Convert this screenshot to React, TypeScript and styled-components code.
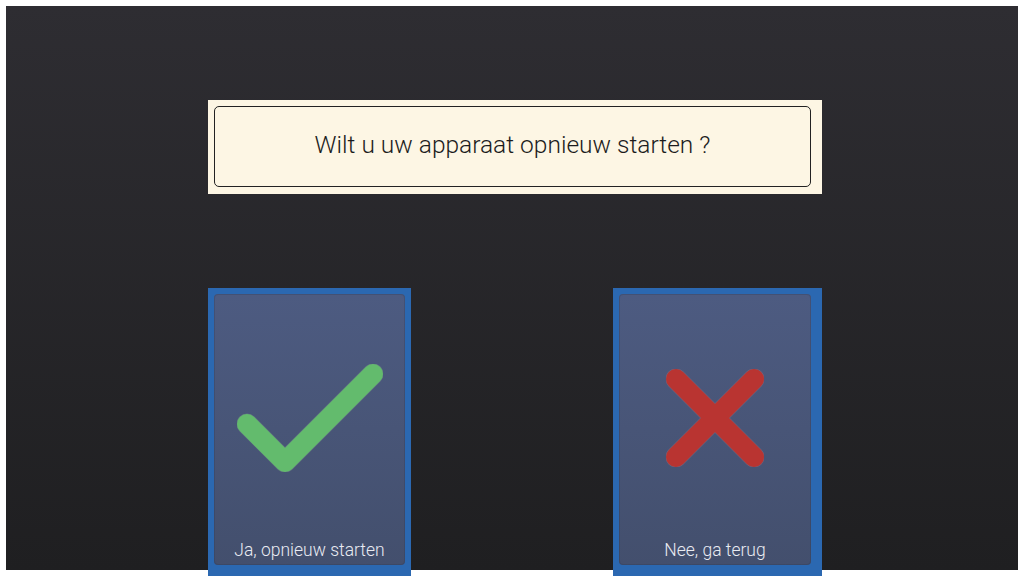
import React from "react";
import styled, { createGlobalStyle } from "styled-components";

const Global = createGlobalStyle`
  html, body {
    margin: 0;
    padding: 0;
    background: #ffffff;
    overflow: hidden;
    height: 576px;
  }
  body {
    padding: 6px;
    box-sizing: border-box;
    font-family: Roboto, "Noto Sans", "Liberation Sans", sans-serif;
  }
`;

const Stage = styled.div`
  width: 1012px;
  height: 564px;
  background: linear-gradient(to bottom, #2e2d32 0%, #1f1f21 100%);
  padding: 94px 0 0 202px;
  box-sizing: border-box;
`;

const Column = styled.div`
  width: 614px;
  display: flex;
  flex-direction: column;
  gap: 94px;
`;

const MessageFrame = styled.div`
  height: 94px;
  background: #fdf6e4;
  padding: 6px 11px 7px 6px;
  box-sizing: border-box;
  display: flex;
`;

const MessageBox = styled.div`
  flex: 1;
  border: 1px solid #222222;
  border-radius: 5px;
  display: flex;
  align-items: center;
  justify-content: center;
  font-size: 24.5px;
  font-weight: 300;
  color: #1c1c1c;
  padding-bottom: 4px;
  box-sizing: border-box;
`;

const ButtonRow = styled.div`
  display: flex;
  justify-content: space-between;
  align-items: flex-start;
`;

const ChoiceButton = styled.button<{ $width: number; $padRight: number }>`
  width: ${(p) => p.$width}px;
  height: 300px;
  flex-shrink: 0;
  background: #2b68b1;
  border: none;
  padding: 6px ${(p) => p.$padRight}px 0 6px;
  box-sizing: border-box;
  display: flex;
  flex-direction: column;
  cursor: pointer;
  font-family: inherit;
`;

const Card = styled.div`
  height: 271px;
  border-radius: 4px;
  background: linear-gradient(to bottom, #4d5b81 0%, #434f6d 100%);
  box-shadow: inset 0 0 0 1px rgba(40, 50, 80, 0.25);
  display: flex;
  flex-direction: column;
`;

const IconArea = styled.div`
  height: 246px;
  display: flex;
  align-items: center;
  justify-content: center;
  padding-top: 2px;
  box-sizing: border-box;
`;

const Label = styled.div`
  line-height: 20px;
  font-size: 17.5px;
  font-weight: 300;
  color: #e9ebf2;
  text-align: center;
`;

const CheckIcon = () => (
  <svg width="146" height="108" viewBox="0 0 146 108">
    <polyline
      points="10,60 48,98 136,10"
      fill="none"
      stroke="#7a9a8a"
      strokeWidth="21"
      strokeLinecap="round"
      strokeLinejoin="round"
      opacity="0.5"
    />
    <polyline
      points="10,60 48,98 136,10"
      fill="none"
      stroke="#63bb6d"
      strokeWidth="20"
      strokeLinecap="round"
      strokeLinejoin="round"
    />
  </svg>
);

const CrossIcon = () => (
  <svg width="98" height="98" viewBox="0 0 98 98">
    <g fill="none" strokeLinecap="round">
      <path d="M10 10 L88 88 M88 10 L10 88" stroke="#8a6a7e" strokeWidth="21" opacity="0.6" />
      <path d="M10 10 L88 88 M88 10 L10 88" stroke="#b93431" strokeWidth="20" />
    </g>
  </svg>
);

export default function App() {
  return (
    <>
      <Global />
      <Stage>
        <Column>
          <MessageFrame>
            <MessageBox>Wilt u uw apparaat opnieuw starten ?</MessageBox>
          </MessageFrame>
          <ButtonRow>
            <ChoiceButton $width={203} $padRight={6}>
              <Card>
                <IconArea>
                  <CheckIcon />
                </IconArea>
                <Label>Ja, opnieuw starten</Label>
              </Card>
            </ChoiceButton>
            <ChoiceButton $width={209} $padRight={11}>
              <Card>
                <IconArea>
                  <CrossIcon />
                </IconArea>
                <Label>Nee, ga terug</Label>
              </Card>
            </ChoiceButton>
          </ButtonRow>
        </Column>
      </Stage>
    </>
  );
}
